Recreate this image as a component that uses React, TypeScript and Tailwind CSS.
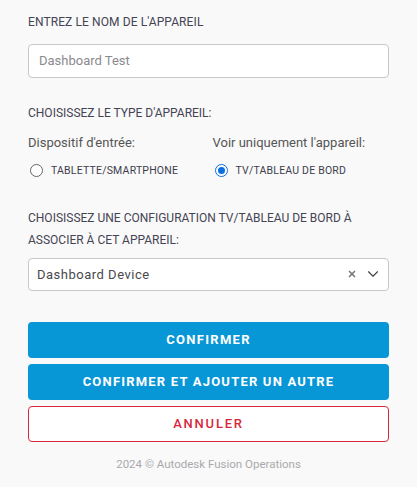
import { X, ChevronDown } from 'lucide-react'

function Radio({ checked, label }: { checked?: boolean; label: string }) {
  return (
    <label className="flex items-center gap-2 text-[10.5px] tracking-[0.2px] text-[#3d3d4d]">
      {checked ? (
        <span className="w-[13px] h-[13px] rounded-full border-[1.5px] border-[#0b6fe0] flex items-center justify-center bg-white">
          <span className="w-[7px] h-[7px] rounded-full bg-[#0b6fe0]" />
        </span>
      ) : (
        <span className="w-[13px] h-[13px] rounded-full border border-[#666] bg-white" />
      )}
      {label}
    </label>
  )
}

export default function App() {
  return (
    <div className="min-h-[487px] bg-[#f9f9f9] font-['Roboto',sans-serif]">
      <main className="px-[28px] pt-[14px] pb-4">
        <h2 className="text-[12px] leading-[16px] text-[#444454] tracking-[0.1px]">ENTREZ LE NOM DE L'APPAREIL</h2>
        <div className="mt-[14px] h-[34px] bg-white border border-[#c8c8cc] rounded-[4px] flex items-center px-[10px] text-[13px] text-[#8a8a8e]">
          Dashboard Test
        </div>

        <h2 className="mt-[27px] text-[12px] leading-[16px] text-[#444454]">CHOISISSEZ LE TYPE D'APPAREIL:</h2>
        <div className="mt-[13px] grid grid-cols-2 gap-4">
          <div>
            <p className="text-[13px] leading-[18px] text-[#555]">Dispositif d'entrée:</p>
            <div className="mt-[11px] pl-[2px]">
              <Radio label="TABLETTE/SMARTPHONE" />
            </div>
          </div>
          <div className="-ml-[4px]">
            <p className="text-[13px] leading-[18px] text-[#555]">Voir uniquement l'appareil:</p>
            <div className="mt-[11px] pl-[2px]">
              <Radio checked label="TV/TABLEAU DE BORD" />
            </div>
          </div>
        </div>

        <h2 className="mt-[28px] text-[12px] leading-[22px] text-[#444454]">
          CHOISISSEZ UNE CONFIGURATION TV/TABLEAU DE BORD À ASSOCIER À CET APPAREIL:
        </h2>
        <div className="mt-[7px] h-[33px] bg-white border border-[#c8c8cc] rounded-[4px] flex items-center pl-[8px] pr-[6px] text-[13px] tracking-[0.5px] text-[#4a4a4e]">
          <span className="flex-1">Dashboard Device</span>
          <X size={10} strokeWidth={4} className="text-[#777] mr-[7px]" />
          <ChevronDown size={18} strokeWidth={1.5} className="text-[#444]" />
        </div>

        <div className="mt-[31px] flex flex-col gap-[6px]">
          <button className="h-[36px] rounded-[4px] bg-[#0796d6] text-white font-bold text-[13px] tracking-[1.3px]">CONFIRMER</button>
          <button className="h-[36px] rounded-[4px] bg-[#0796d6] text-white font-bold text-[13px] tracking-[1.2px]">CONFIRMER ET AJOUTER UN AUTRE</button>
          <button className="h-[36px] rounded-[4px] bg-white border border-[#d6283c] text-[#d6283c] font-medium text-[13px] tracking-[1.8px]">ANNULER</button>
        </div>

        <p className="mt-[14px] text-center text-[11.5px] text-[#a9a9ad]">2024 © Autodesk Fusion Operations</p>
      </main>
    </div>
  )
}
